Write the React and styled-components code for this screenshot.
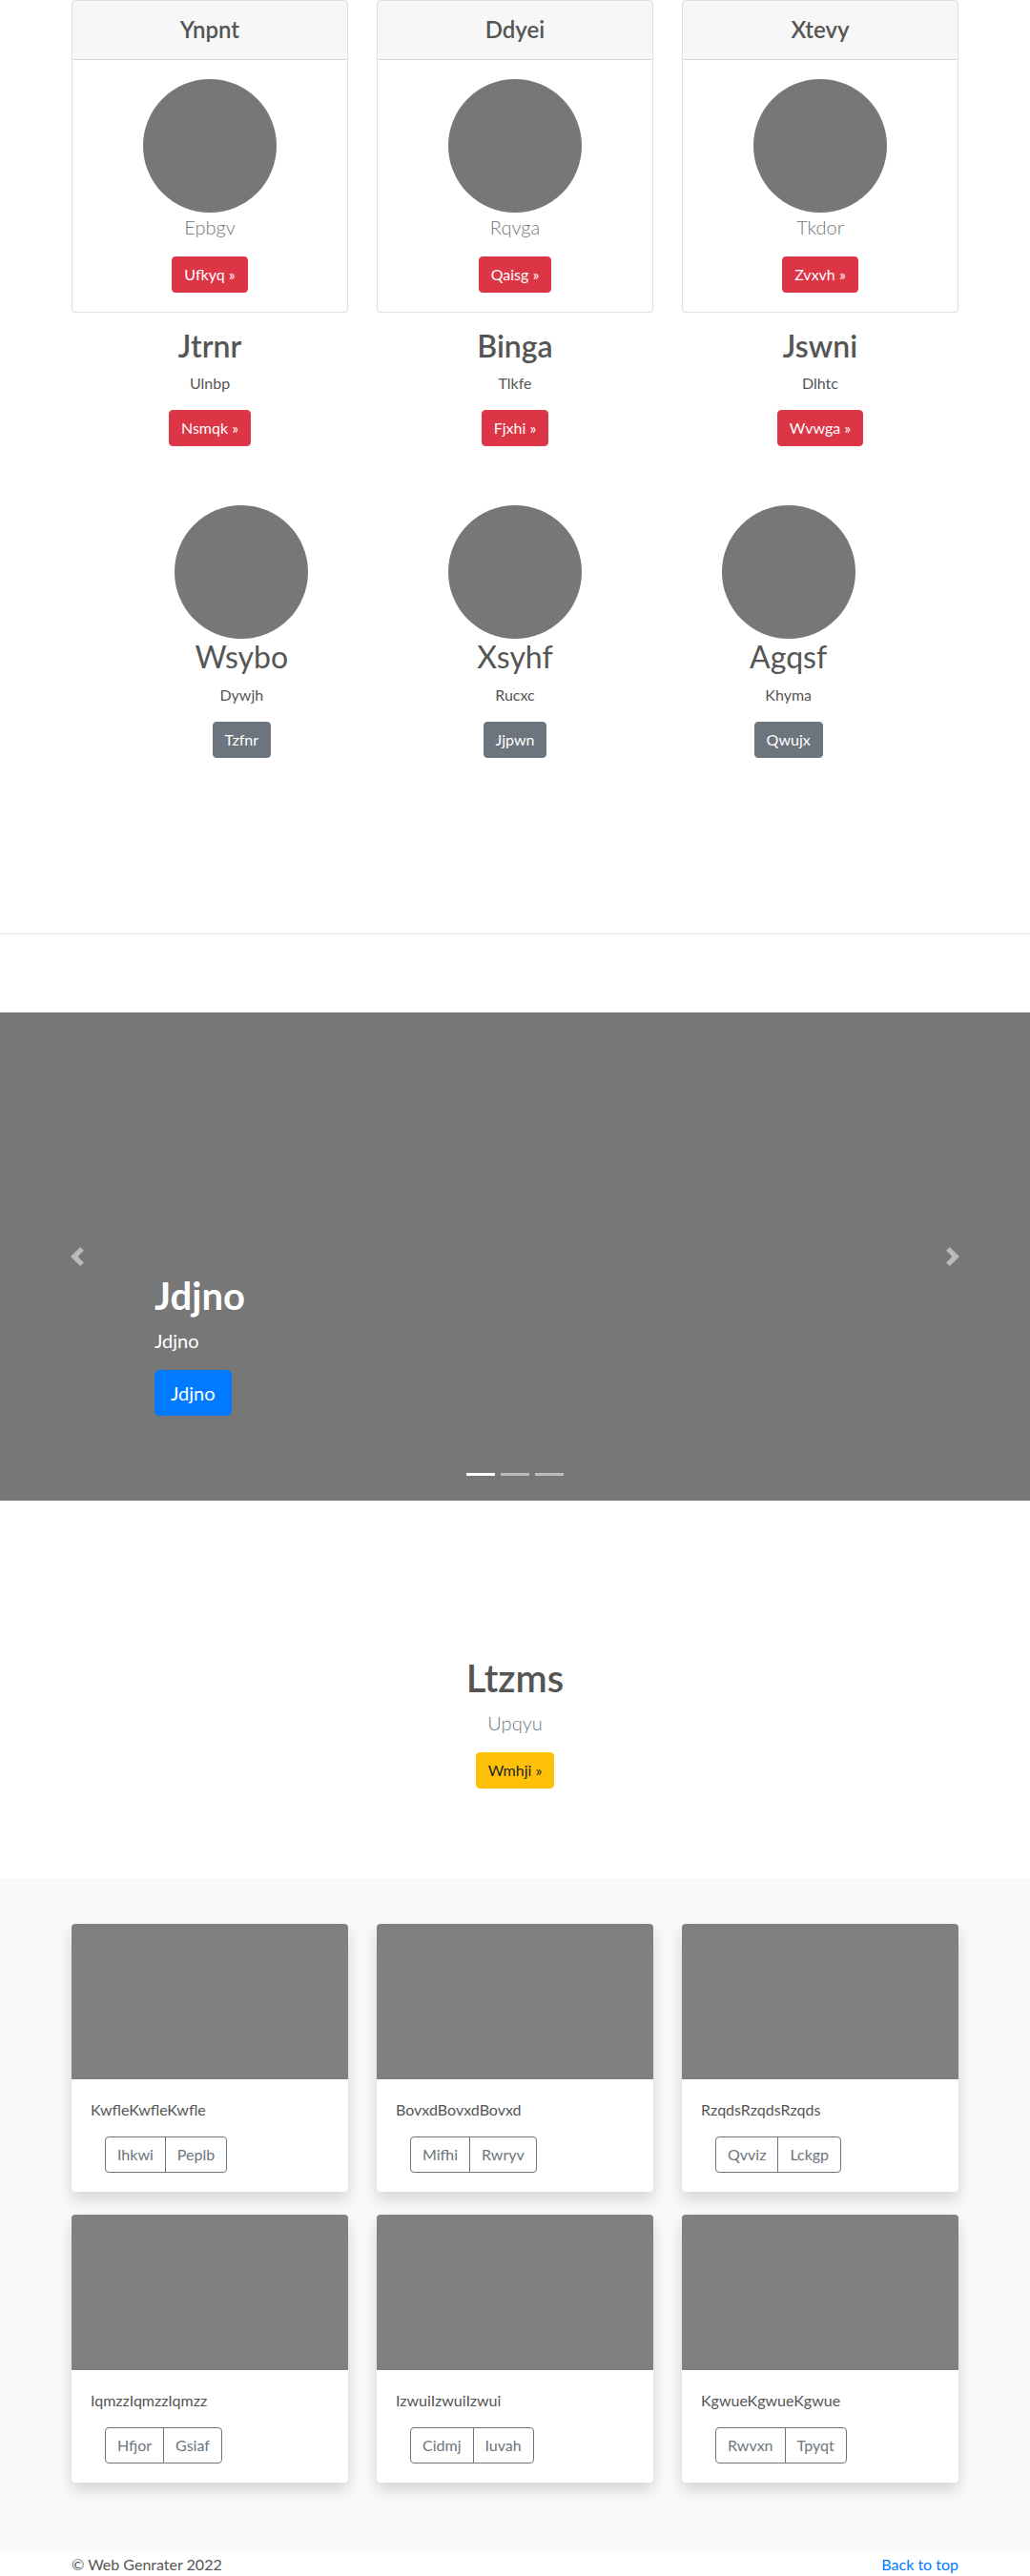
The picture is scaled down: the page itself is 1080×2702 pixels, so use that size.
import React from 'react';
import styled, { createGlobalStyle } from "styled-components";

const pricing = [
    { title: "Ynpnt", lead: "Epbgv", action: "Ufkyq" },
    { title: "Ddyei", lead: "Rqvga", action: "Qaisg" },
    { title: "Xtevy", lead: "Tkdor", action: "Zvxvh" },
];

const features = [
    { title: "Jtrnr", text: "Ulnbp", action: "Nsmqk" },
    { title: "Binga", text: "Tlkfe", action: "Fjxhi" },
    { title: "Jswni", text: "Dlhtc", action: "Wvwga" },
];

const people = [
    { name: "Wsybo", text: "Dywjh", action: "Tzfnr" },
    { name: "Xsyhf", text: "Rucxc", action: "Jjpwn" },
    { name: "Agqsf", text: "Khyma", action: "Qwujx" },
];

const album = [
    { text: "KwfleKwfleKwfle", buttons: ["Ihkwi", "Peplb"] },
    { text: "BovxdBovxdBovxd", buttons: ["Mifhi", "Rwryv"] },
    { text: "RzqdsRzqdsRzqds", buttons: ["Qvviz", "Lckgp"] },
    { text: "IqmzzIqmzzIqmzz", buttons: ["Hfjor", "Gsiaf"] },
    { text: "IzwuiIzwuiIzwui", buttons: ["Cidmj", "Iuvah"] },
    { text: "KgwueKgwueKgwue", buttons: ["Rwvxn", "Tpyqt"] },
];

const Chevron = ({ flip }) => (
    <svg width="20" height="20" viewBox="0 0 8 8" style={flip ? { transform: "scaleX(-1)" } : undefined}>
        <path fill="#fff" d="M5.25 0l-4 4 4 4 1.5-1.5L4.25 4l2.5-2.5L5.25 0z" />
    </svg>
);

const App = () => {
    return (
        <>
            <GlobalStyle />
            <Container>
                <PricingGrid>
                    {pricing.map((item) => (
                        <PriceCard key={item.title}>
                            <CardHeader>
                                <CardTitle>{item.title}</CardTitle>
                            </CardHeader>
                            <CardBody>
                                <Avatar />
                                <Lead>{item.lead}</Lead>
                                <Button $variant="danger">{item.action} &raquo;</Button>
                            </CardBody>
                        </PriceCard>
                    ))}
                </PricingGrid>

                <FeatureGrid>
                    {features.map((item) => (
                        <Column key={item.title}>
                            <Heading $weight={600}>{item.title}</Heading>
                            <Text>{item.text}</Text>
                            <Button $variant="danger">{item.action} &raquo;</Button>
                        </Column>
                    ))}
                </FeatureGrid>

                <MarketingGrid>
                    {people.map((item) => (
                        <Column key={item.name}>
                            <Avatar />
                            <Heading $weight={400}>{item.name}</Heading>
                            <Text>{item.text}</Text>
                            <Button $variant="secondary">{item.action}</Button>
                        </Column>
                    ))}
                </MarketingGrid>
            </Container>

            <Divider />

            <Carousel>
                <Control $side="left"><Chevron /></Control>
                <Caption>
                    <CaptionTitle>Jdjno</CaptionTitle>
                    <CaptionText>Jdjno</CaptionText>
                    <Button $variant="primary" $large>Jdjno</Button>
                </Caption>
                <Control $side="right"><Chevron flip /></Control>
                <Indicators>
                    <Indicator $active />
                    <Indicator />
                    <Indicator />
                </Indicators>
            </Carousel>

            <Promo>
                <PromoTitle>Ltzms</PromoTitle>
                <Lead>Upqyu</Lead>
                <Button $variant="warning">Wmhji &raquo;</Button>
            </Promo>

            <AlbumSection>
                <Container>
                    <AlbumGrid>
                        {album.map((item) => (
                            <AlbumCard key={item.text}>
                                <Thumb />
                                <AlbumBody>
                                    <AlbumText>{item.text}</AlbumText>
                                    <ButtonGroup>
                                        {item.buttons.map((b) => (
                                            <OutlineButton key={b}>{b}</OutlineButton>
                                        ))}
                                    </ButtonGroup>
                                </AlbumBody>
                            </AlbumCard>
                        ))}
                    </AlbumGrid>
                </Container>
            </AlbumSection>

            <Footer>
                <FooterInner>
                    <span>&copy; Web Genrater 2022</span>
                    <TopLink href="#">Back to top</TopLink>
                </FooterInner>
            </Footer>
        </>
    );
};

export default App;

const GlobalStyle = createGlobalStyle`
    body {
        margin: 0;
        font-family: "Segoe UI", Lato, "Noto Sans", sans-serif;
        font-size: 16px;
        line-height: 1.5;
        color: #555;
        background: #fff;
    }
    * { box-sizing: border-box; }
`;

const Container = styled.div`
    max-width: 960px;
    margin: 0 auto;
    padding: 0 15px;
`;

const PricingGrid = styled.div`
    display: grid;
    grid-template-columns: repeat(3, 1fr);
    gap: 30px;
`;

const PriceCard = styled.div`
    display: flex;
    flex-direction: column;
    border: 1px solid rgba(0, 0, 0, 0.125);
    border-radius: 4px;
    text-align: center;
    overflow: hidden;
`;

const CardHeader = styled.div`
    padding: 16px 20px;
    background: rgba(0, 0, 0, 0.03);
    border-bottom: 1px solid rgba(0, 0, 0, 0.125);
`;

const CardTitle = styled.h4`
    margin: 0;
    font-size: 24px;
    font-weight: 600;
    line-height: 1.2;
`;

const CardBody = styled.div`
    display: flex;
    flex-direction: column;
    align-items: center;
    padding: 20px;
`;

const Avatar = styled.div`
    width: 140px;
    height: 140px;
    border-radius: 50%;
    background: #777;
`;

const Lead = styled.p`
    margin: 0 0 16px;
    font-size: 20px;
    font-weight: 300;
    color: #6c757d;
`;

const variants = {
    danger: { bg: "#dc3545", fg: "#fff" },
    secondary: { bg: "#6c757d", fg: "#fff" },
    primary: { bg: "#007bff", fg: "#fff" },
    warning: { bg: "#ffc107", fg: "#212529" },
};

const Button = styled.a`
    display: inline-block;
    padding: ${(p) => (p.$large ? "8px 16px" : "6px 12px")};
    font-size: ${(p) => (p.$large ? "20px" : "16px")};
    line-height: 1.5;
    border: 1px solid ${(p) => variants[p.$variant].bg};
    border-radius: ${(p) => (p.$large ? "5px" : "4px")};
    background: ${(p) => variants[p.$variant].bg};
    color: ${(p) => variants[p.$variant].fg};
    text-decoration: none;
    cursor: pointer;
`;

const FeatureGrid = styled.div`
    display: grid;
    grid-template-columns: repeat(3, 1fr);
    gap: 30px;
    margin-top: 16px;
`;

const MarketingGrid = styled.div`
    display: grid;
    grid-template-columns: repeat(3, 1fr);
    max-width: 860px;
    margin: 62px auto 0;
    padding-bottom: 184px;
`;

const Column = styled.div`
    display: flex;
    flex-direction: column;
    align-items: center;
    text-align: center;
`;

const Heading = styled.h2`
    margin: 0 0 8px;
    font-size: 32px;
    font-weight: ${(p) => p.$weight};
    line-height: 1.2;
`;

const Text = styled.p`
    margin: 0 0 16px;
`;

const Divider = styled.hr`
    margin: 0;
    border: 0;
    border-top: 1px solid rgba(0, 0, 0, 0.1);
`;

const Carousel = styled.div`
    position: relative;
    height: 512px;
    margin-top: 82px;
    background: #777;
    display: flex;
    align-items: flex-end;
    padding: 0 15% 89px;
`;

const Control = styled.div`
    position: absolute;
    top: 0;
    bottom: 0;
    ${(p) => p.$side}: 0;
    width: 15%;
    display: flex;
    align-items: center;
    justify-content: center;
    opacity: 0.5;
`;

const Caption = styled.div`
    color: #fff;
`;

const CaptionTitle = styled.h1`
    margin: 0 0 8px;
    font-size: 40px;
    font-weight: 700;
    line-height: 1.2;
`;

const CaptionText = styled.p`
    margin: 0 0 16px;
    font-size: 20px;
`;

const Indicators = styled.div`
    position: absolute;
    left: 0;
    right: 0;
    bottom: 26px;
    display: flex;
    justify-content: center;
`;

const Indicator = styled.span`
    width: 30px;
    height: 3px;
    margin: 0 3px;
    background: #fff;
    opacity: ${(p) => (p.$active ? 1 : 0.5)};
`;

const Promo = styled.section`
    display: flex;
    flex-direction: column;
    align-items: center;
    text-align: center;
    padding: 162px 0 94px;
`;

const PromoTitle = styled.h1`
    margin: 0 0 8px;
    font-size: 40px;
    font-weight: 600;
    line-height: 1.2;
`;

const AlbumSection = styled.section`
    background: #f8f9fa;
    padding: 48px 0;
`;

const AlbumGrid = styled.div`
    display: grid;
    grid-template-columns: repeat(3, 1fr);
    column-gap: 30px;
    row-gap: 24px;
    padding-bottom: 24px;
`;

const AlbumCard = styled.div`
    background: #fff;
    border-radius: 4px;
    overflow: hidden;
    box-shadow: 0 8px 16px rgba(0, 0, 0, 0.15);
`;

const Thumb = styled.div`
    height: 163px;
    background: #808080;
`;

const AlbumBody = styled.div`
    padding: 20px;
`;

const AlbumText = styled.p`
    margin: 0 0 16px;
`;

const ButtonGroup = styled.div`
    display: inline-flex;
    margin-left: 15px;
`;

const OutlineButton = styled.button`
    font-family: inherit;
    font-size: 16px;
    line-height: 1.5;
    padding: 6px 12px;
    color: #6c757d;
    background: transparent;
    border: 1px solid #6c757d;
    cursor: pointer;

    &:first-child {
        border-radius: 4px 0 0 4px;
    }
    &:last-child {
        border-radius: 0 4px 4px 0;
        margin-left: -1px;
    }
`;

const Footer = styled.footer`
    padding: 2px 0 48px;
`;

const FooterInner = styled(Container)`
    display: flex;
    justify-content: space-between;
`;

const TopLink = styled.a`
    color: #007bff;
    text-decoration: none;
`;
